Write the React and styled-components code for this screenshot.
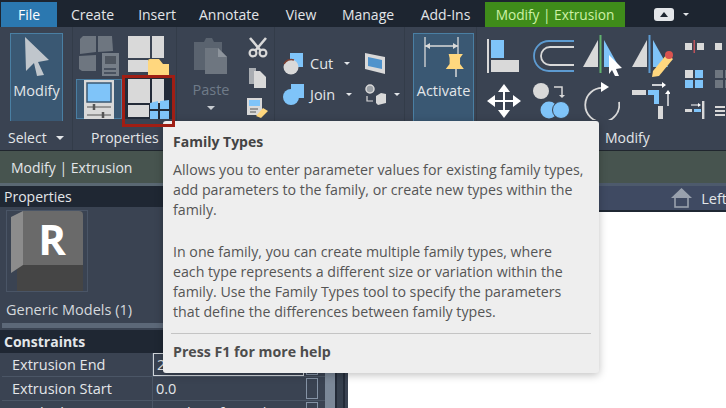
import React from 'react'
import styled, { createGlobalStyle } from 'styled-components'

const GREY = '#d9d9d9'
const BLUE = '#7fc4f9'
const YELLOW = '#ffd77e'

const GlobalStyles = createGlobalStyle`
  html, body {
    margin: 0;
    padding: 0;
    background: #ffffff;
  }
  * {
    box-sizing: border-box;
  }
`

const Page = styled.div`
  position: relative;
  width: 726px;
  height: 408px;
  overflow: hidden;
  font-family: "Open Sans", "Noto Sans", sans-serif;
  font-size: 14px;
  color: #e3e6e9;
  background: #ffffff;
`

const TabBar = styled.div`
  display: flex;
  align-items: flex-end;
  height: 27px;
  padding-left: 1px;
  background: #1d2530;
`

const Tab = styled.div`
  display: flex;
  align-items: center;
  justify-content: center;
  height: 25px;
  width: ${p => p.$w}px;
  background: ${p => p.$bg || 'transparent'};
  color: ${p => p.$color || '#e3e6e9'};
  font-size: ${p => p.$fs || 14}px;
  white-space: nowrap;
`

const ViewToggle = styled.div`
  display: flex;
  align-items: center;
  gap: 7px;
  margin-left: 29px;
  height: 25px;
`

const Ribbon = styled.div`
  display: flex;
  height: 124px;
  background: #3a4352;
  border-bottom: 1px solid #20262e;
`

const Panel = styled.div`
  position: relative;
  display: flex;
  flex-direction: column;
  width: ${p => p.$w}px;
  flex: none;
  border-right: ${p => (p.$last ? 'none' : '1px solid #333c49')};
`

const PanelBody = styled.div`
  display: flex;
  height: 98px;
  padding: 6px 0 0 ${p => p.$pl || 0}px;
`

const PanelLabel = styled.div`
  display: flex;
  align-items: center;
  gap: 9px;
  height: 25px;
  padding-left: ${p => p.$pl}px;
  font-size: 14px;
  color: #e3e6e9;
  white-space: nowrap;
`

const Caret = styled.span`
  display: inline-block;
  flex: none;
  width: 0;
  height: 0;
  margin-left: ${p => p.$ml || 0}px;
  border-left: ${p => p.$s || 4}px solid transparent;
  border-right: ${p => p.$s || 4}px solid transparent;
  border-top: ${p => p.$s || 4}px solid ${p => p.$color || '#e3e6e9'};
`

const LargeTool = styled.div`
  display: flex;
  flex-direction: column;
  align-items: center;
  width: ${p => p.$w}px;
  height: 88px;
  padding-top: ${p => p.$pt || 2}px;
  background: ${p => (p.$active ? '#3a5873' : 'transparent')};
  border: 1px solid ${p => (p.$active ? '#4a7fa3' : 'transparent')};
  border-bottom: ${p => (p.$active ? '0' : '1px solid transparent')};
  color: ${p => (p.$dim ? '#6f7b89' : '#e3e6e9')};
  font-size: 14.5px;
  line-height: 20px;
  gap: ${p => p.$gap ?? 3}px;
`

const PropertyGrid = styled.div`
  display: grid;
  grid-template-columns: 46px 53px;
  grid-template-rows: 42px 52px;
`

const PropertyCell = styled.div`
  position: relative;
  display: flex;
  justify-content: center;
  align-items: flex-start;
  padding-top: 3px;
`

const ActiveCell = styled.div`
  display: flex;
  justify-content: center;
  align-items: center;
  width: 46px;
  height: 40px;
  margin-top: 1px;
  background: #3a5873;
  border: 1px solid #4a7fa3;
`

const HoverTile = styled.div`
  display: flex;
  justify-content: center;
  width: 47px;
  height: 41px;
  padding-top: 1px;
  background: #232b38;
`

// the red frame was drawn over the shot, so it sits above the tooltip
const RedFrame = styled.div`
  position: absolute;
  left: 0;
  top: 0;
  width: 53px;
  height: 52px;
  border: 3px solid #a01e14;
  z-index: 3;
`

const IconColumn = styled.div`
  display: flex;
  flex-direction: column;
  align-items: center;
  gap: 10px;
  margin: 4px 0 0 11px;
`

const GeometryRows = styled.div`
  display: grid;
  grid-template-columns: 20px 48px 20px 14px;
  grid-template-rows: 31px 31px;
  align-items: center;
  margin-top: 15px;
  column-gap: 7px;
`

const ToolText = styled.div`
  display: flex;
  align-items: center;
  gap: 11px;
  font-size: 14.5px;
`

const BigIcons = styled.div`
  display: grid;
  grid-template-columns: 46px 50px 49px 53px;
  grid-template-rows: 45px 45px;
  align-items: center;
`

const SmallIcons = styled.div`
  display: grid;
  grid-template-columns: 30px 30px;
  grid-template-rows: 32px 31px 31px;
  align-items: center;
  margin-top: -2px;
`

const ContextBar = styled.div`
  display: flex;
  align-items: center;
  height: 32px;
  padding: 1px 0 0 11px;
  background: #47544f;
  font-size: 14px;
`

const Workspace = styled.div`
  display: flex;
  height: 225px;
`

const PropertiesPane = styled.div`
  width: 348px;
  flex: none;
  display: flex;
  flex-direction: column;
  background: #3a4352;
  border-top: 3px solid #5a6873;
`

const PaneTitle = styled.div`
  display: flex;
  flex: none;
  align-items: center;
  height: 21px;
  padding-left: 4px;
  background: #1f2733;
  font-size: 14px;
`

const TypeBlock = styled.div`
  display: flex;
  flex: none;
  flex-direction: column;
  height: 116px;
  padding: 3px 0 0 6px;
`

const Thumb = styled.div`
  display: flex;
  flex: none;
  justify-content: center;
  align-items: center;
  width: 82px;
  height: 82px;
  border: 1px solid #4a5566;
`

const TypeName = styled.div`
  margin-top: 8px;
  font-size: 14.5px;
  color: #d5d9dd;
`

const SplitLine = styled.div`
  flex: none;
  height: 5px;
  margin: 0 0 2px 2px;
  background: #5c6878;
`

const Grid = styled.div`
  display: grid;
  flex: none;
  grid-template-columns: 325px 23px;
  height: 80px;
`

const Rows = styled.div`
  display: flex;
  flex-direction: column;
`

const SectionRow = styled.div`
  display: flex;
  flex: none;
  align-items: center;
  height: 23px;
  padding-left: 4px;
  background: #1f2733;
  font-weight: 700;
  font-size: 14px;
`

const PropRow = styled.div`
  display: grid;
  flex: none;
  grid-template-columns: 151px 151px 19px;
  height: 24px;
  margin-left: 2px;
  border-bottom: 1px solid #4b5666;
`

const PropName = styled.div`
  display: flex;
  align-items: center;
  padding-left: 10px;
  font-size: 14.5px;
  border-right: 1px solid #4b5666;
`

const PropValue = styled.div`
  display: flex;
  align-items: center;
  padding-left: 3px;
  font-size: 14.5px;
  border: ${p => (p.$editing ? '1px solid #cfd4d9' : 'none')};
`

const RowCheck = styled.div`
  width: 12px;
  height: 21px;
  margin: 1px 0 0 2px;
  border: 1px solid #8593a5;
`

const ScrollTrack = styled.div`
  display: flex;
  background: #3a4352;
`

const ScrollThumb = styled.div`
  width: 10px;
  background: #7b8898;
`

const ScrollLane = styled.div`
  width: 10px;
  background: #36404e;
  border-left: 2px solid #232b38;
  border-right: 2px solid #232b38;
`

const ViewArea = styled.div`
  flex: 1;
  background: #ffffff;
`

const ViewHeader = styled.div`
  display: flex;
  align-items: center;
  justify-content: flex-end;
  gap: 9px;
  height: 29px;
  margin-right: -1px;
  background: #3f4a62;
  border-top: 3px solid #4d5a6c;
  border-bottom: 2px solid #1f2733;
  font-size: 14.5px;
`

const Tooltip = styled.div`
  position: absolute;
  left: 163px;
  top: 121px;
  z-index: 2;
  width: 436px;
  height: 252px;
  padding: 11px 8px 0 10px;
  background: #eeeeee;
  border-radius: 3px;
  box-shadow: 0 2px 8px rgba(0, 0, 0, 0.25);
  color: #555555;
`

const TipTitle = styled.div`
  font-weight: 700;
  font-size: 14px;
  line-height: 20px;
  color: #444444;
`

const TipText = styled.p`
  margin: 8px 0 22px;
  font-size: 14.2px;
  line-height: 20px;
  white-space: pre-line;
  & + & {
    margin-top: 0;
    margin-bottom: 11px;
  }
`

const TipRule = styled.div`
  height: 1px;
  margin-left: -2px;
  background: #c4c4c4;
`

const TipFooter = styled.div`
  margin-top: 8px;
  font-weight: 700;
  font-size: 14.2px;
  line-height: 20px;
  color: #4d4d4d;
`

const Pointer = () => (
  <svg width="26" height="42" viewBox="0 0 26 42">
    <polygon points="1,1 25,24 14,26 20,39 13,40 10,27 2,35" fill="#c0c6cc" />
  </svg>
)

const ViewCube = () => (
  <svg width="22" height="14" viewBox="0 0 22 14">
    <rect x="0" y="0" width="20" height="13" rx="3" fill="#e3e6e9" />
    <polygon points="6,9 10,4 14,9" fill="#1d2530" />
  </svg>
)

const TypesIcon = () => (
  <svg width="42" height="40" viewBox="0 0 42 40">
    <g fill="#6e7680">
      <polygon points="2,3 5,0 18,0 18,16 2,18" />
      <polygon points="20,0 34,0 35,15 20,16" />
      <polygon points="1,20 18,19 18,35 4,35 1,33" />
    </g>
    <rect x="24" y="17" width="17" height="23" fill="#767e88" />
    <rect x="27" y="20" width="11" height="8" fill="#4f5660" />
    <path d="M26 33h12M26 37h12" stroke="#3a4352" strokeWidth="1.4" />
  </svg>
)

const FolderIcon = () => (
  <svg width="41" height="41" viewBox="0 0 41 41">
    <g fill={GREY}>
      <rect x="0" y="0" width="22" height="22" />
      <rect x="24" y="0" width="12" height="22" />
      <rect x="0" y="24" width="20" height="12" />
    </g>
    <path d="M20 41V25q0-2 2-2h9l4 5h6v13z" fill={YELLOW} />
  </svg>
)

const TypePropsIcon = () => (
  <svg width="30" height="39" viewBox="0 0 30 39">
    <rect width="30" height="39" fill="#d9d9d9" />
    <rect x="3" y="3" width="24" height="19" fill={BLUE} stroke="#3a5873" strokeWidth="1.5" />
    <path d="M3 27h24M3 35h24" stroke="#555" strokeWidth="1" />
    <path d="M10 24v6M19 32v6" stroke="#555" strokeWidth="2.5" />
  </svg>
)

const FamilyTypesIcon = () => (
  <svg width="42" height="40" viewBox="0 0 42 40">
    <g fill={GREY}>
      <rect x="0" y="0" width="22" height="24" />
      <rect x="24" y="0" width="12" height="24" />
      <rect x="0" y="26" width="21" height="12" />
    </g>
    <g fill={BLUE}>
      <polygon points="22,24 30,22 30,30 22,30" />
      <polygon points="32,22 41,21 41,30 32,30" />
      <rect x="22" y="32" width="8" height="8" />
      <rect x="32" y="32" width="9" height="8" />
    </g>
  </svg>
)

const PasteIcon = () => (
  <svg width="34" height="38" viewBox="0 0 34 38">
    <path d="M0 6h10l2-4h6l2 4h8v28H0z" fill="#5a636f" />
    <path d="M11 12h13l9 9v17H11z" fill="#6e7680" />
    <path d="M24 12l9 9h-9z" fill="#8d949c" />
  </svg>
)

const Scissors = () => (
  <svg width="20" height="21" viewBox="0 0 20 21">
    <path d="M2 1l11 13M18 1L7 14" stroke={GREY} strokeWidth="2.6" />
    <circle cx="5" cy="16" r="3.4" fill="none" stroke={GREY} strokeWidth="2.2" />
    <circle cx="15" cy="16" r="3.4" fill="none" stroke={GREY} strokeWidth="2.2" />
  </svg>
)

const CopyIcon = () => (
  <svg width="17" height="20" viewBox="0 0 17 20">
    <path d="M0 0h7v16H0z" fill="#a9adb2" />
    <path d="M5 3h6l6 6v11H5z" fill={GREY} />
  </svg>
)

const MatchIcon = () => (
  <svg width="21" height="20" viewBox="0 0 21 20">
    <rect width="15" height="17" fill={GREY} />
    <rect x="2" y="2" width="11" height="6" fill={BLUE} />
    <path d="M3 11h8M3 14h6" stroke="#555" />
    <path d="M9 18l7-8 5 3-7 7z" fill={YELLOW} />
  </svg>
)

const CutIcon = () => (
  <svg width="20" height="22" viewBox="0 0 20 22">
    <rect x="7" y="0" width="13" height="14" fill={BLUE} />
    <circle cx="8" cy="14" r="7.5" fill={GREY} />
    <path d="M1 11a8 8 0 0 1 10-4" stroke="#7b3f32" strokeWidth="1.5" fill="none" />
  </svg>
)

const JoinIcon = () => (
  <svg width="21" height="21" viewBox="0 0 21 21">
    <rect x="8" y="0" width="13" height="14" fill={BLUE} />
    <circle cx="8" cy="13" r="8" fill={BLUE} />
  </svg>
)

const WindowIcon = () => (
  <svg width="20" height="21" viewBox="0 0 20 21">
    <polygon points="0,0 20,4 20,21 0,16" fill={GREY} />
    <polygon points="3,4 17,7 17,16 3,13" fill="#4f93cc" />
  </svg>
)

const ConvertIcon = () => (
  <svg width="21" height="21" viewBox="0 0 21 21">
    <circle cx="5" cy="5" r="4" fill="#9aa0a6" stroke="#d9d9d9" strokeWidth="1.5" />
    <path d="M2 12v5h6" fill="none" stroke={GREY} strokeWidth="1.2" />
    <polygon points="11,12 16,9 21,10 21,19 13,21 11,19" fill={GREY} />
  </svg>
)

const ActivateIcon = () => (
  <svg width="40" height="42" viewBox="0 0 40 42">
    <path d="M1 0v30M34 0v22M1 9h33" stroke={GREY} strokeWidth="1.3" fill="none" />
    <path d="M1 9l5-3v6zM34 9l-5-3v6z" fill={GREY} />
    <path d="M27 17h15l-3 4v6l4 5H24l4-5v-6z" transform="translate(-1 0) scale(.95 1)" fill={YELLOW} />
    <path d="M32 32v8" stroke={GREY} strokeWidth="1.5" />
  </svg>
)

const AlignIcon = () => (
  <svg width="33" height="34" viewBox="0 0 33 34">
    <rect x="0" y="0" width="2" height="34" fill={GREY} />
    <rect x="4" y="1" width="13" height="18" fill={BLUE} />
    <rect x="4" y="21" width="28" height="12" fill={GREY} />
  </svg>
)

const OffsetIcon = () => (
  <svg width="42" height="32" viewBox="0 0 42 32">
    <path d="M41 1H16a15 15 0 0 0 0 30h25" fill="none" stroke="#5d9bd1" strokeWidth="1.8" />
    <path d="M41 7H17a9 9 0 0 0 0 18h24" fill="none" stroke={GREY} strokeWidth="1.8" />
  </svg>
)

const MirrorIcon = ({ line = '#61b36e', cursor }) => (
  <svg width="41" height="42" viewBox="0 0 41 42">
    <polygon points="0,32 15,5 15,32" fill={GREY} />
    <rect x="16.5" y="0" width="2" height="38" fill={line} />
    <polygon points="21,5 36,32 21,32" fill={BLUE} />
    {cursor && <polygon points="26,20 39,33 33,34 36,41 32,41 29,35 26,39" fill="#ffffff" />}
  </svg>
)

const MirrorDrawIcon = () => (
  <svg width="41" height="42" viewBox="0 0 41 42">
    <polygon points="0,32 15,5 15,32" fill={GREY} />
    <rect x="16.5" y="0" width="2" height="38" fill="#5d9bd1" />
    <polygon points="21,5 36,32 21,32" fill={BLUE} />
    <path d="M21 36l14-17 6 5-14 17-7 1z" fill={YELLOW} />
    <circle cx="37" cy="20" r="4" fill="#d9534f" />
  </svg>
)

const MoveIcon = () => (
  <svg width="34" height="34" viewBox="0 0 34 34" fill="#ffffff">
    <path d="M17 0l6 8h-5v8h8v-5l8 6-8 6v-5h-8v8h5l-6 8-6-8h5v-8H8v5L0 17l8-6v5h8V8h-5z" />
  </svg>
)

const CopyCirclesIcon = () => (
  <svg width="37" height="36" viewBox="0 0 37 36">
    <circle cx="8" cy="8" r="8" fill={GREY} />
    <path d="M21 4h8v8" fill="none" stroke={GREY} strokeWidth="1.5" />
    <path d="M26 12l3 3 3-3z" fill={GREY} />
    <circle cx="16" cy="27" r="8.5" fill={BLUE} />
    <circle cx="28" cy="27" r="8.5" fill={BLUE} stroke="#3a4352" strokeWidth="1" />
  </svg>
)

const RotateIcon = () => (
  <svg width="37" height="38" viewBox="0 0 37 38">
    <path d="M21 6a17 17 0 1 0 15 14" fill="none" stroke={GREY} strokeWidth="1.8" />
    <polygon points="18,0 26,5 18,10" fill="#ffffff" />
  </svg>
)

const TrimIcon = () => (
  <svg width="38" height="37" viewBox="0 0 38 37">
    <path d="M0 8h14v5H0z" fill={GREY} />
    <path d="M16 8h11v14h-5v-9h-6z" fill={BLUE} />
    <rect x="26" y="24" width="5" height="13" fill={GREY} />
    <path d="M20 3h10M36 11v13" stroke="#ffffff" strokeWidth="1.3" />
    <path d="M30 0l4 3-4 3zM33 12l3-4 3 4z" fill="#ffffff" />
  </svg>
)

const SplitGapIcon = ({ bar = true }) => (
  <svg width="20" height="14" viewBox="0 0 20 14">
    <rect x="0" y="3" width="7" height="7" fill={GREY} />
    {bar && <rect x="8.5" y="0" width="1.5" height="13" fill="#c0525a" />}
    <rect x="12" y="3" width="7" height="7" fill={GREY} />
  </svg>
)

const ArrayIcon = ({ on = true }) => (
  <svg width="18" height="18" viewBox="0 0 18 18">
    <rect x="0" y="0" width="8" height="8" fill={on ? GREY : '#6e7680'} />
    <rect x="10" y="0" width="8" height="8" fill={on ? BLUE : '#6e7680'} />
    <rect x="0" y="10" width="8" height="8" fill={on ? BLUE : '#6e7680'} />
    <rect x="10" y="10" width="8" height="8" fill={on ? BLUE : '#6e7680'} />
  </svg>
)

const ExtendIcon = () => (
  <svg width="20" height="18" viewBox="0 0 20 18">
    <rect x="17" y="0" width="2.4" height="18" fill={GREY} />
    <rect x="0" y="8" width="7" height="3" fill={GREY} />
    <rect x="9" y="8" width="7" height="3" fill={BLUE} />
    <path d="M6 4h8" stroke="#ffffff" />
    <path d="M13 2l3 2-3 2z" fill="#ffffff" />
  </svg>
)

const LinesIcon = () => (
  <svg width="10" height="18" viewBox="0 0 10 18">
    <path d="M0 6h10M0 10h10M0 14h10" stroke={GREY} strokeWidth="2" />
  </svg>
)

const HomeIcon = () => (
  <svg width="21" height="20" viewBox="0 0 21 20">
    <polygon points="10.5,0 21,10 0,10" fill="#99a1ad" />
    <rect x="4" y="9" width="13" height="10" fill="none" stroke="#99a1ad" strokeWidth="1.6" />
  </svg>
)

const RevitThumb = () => (
  <svg width="72" height="80" viewBox="0 0 72 80">
    <polygon points="6,54 72,54 72,80 6,80" fill="#454545" />
    <polygon points="0,6 12,0 12,54 0,62" fill="#8c8c8c" />
    <path d="M12 0h56q4 0 4 4v50H12z" fill="#6a6a6a" />
    <text x="41" y="44" textAnchor="middle" fontFamily="Open Sans, sans-serif" fontWeight="700" fontSize="42" fill="#ffffff">R</text>
  </svg>
)

const tabs = [
  ['Create', 71],
  ['Insert', 58],
  ['Annotate', 86],
  ['View', 58],
  ['Manage', 76],
  ['Add-Ins', 79],
]

export default function App() {
  return (
    <Page>
      <GlobalStyles />
      <TabBar>
        <Tab $w={56} $bg="#2b78b0" $color="#ffffff">File</Tab>
        {tabs.map(([name, w]) => (
          <Tab key={name} $w={w}>{name}</Tab>
        ))}
        <Tab $w={140} $bg="#3f8c1a" $color="#cdf1a6" $fs={13.7}>Modify | Extrusion</Tab>
        <ViewToggle>
          <ViewCube />
          <Caret $s={3} />
        </ViewToggle>
      </TabBar>

      <Ribbon>
        <Panel $w={73}>
          <PanelBody $pl={10}>
            <LargeTool $w={53} $active>
              <Pointer />
              Modify
            </LargeTool>
          </PanelBody>
          <PanelLabel $pl={8}>Select <Caret $s={4.5} /></PanelLabel>
        </Panel>

        <Panel $w={104}>
          <PanelBody $pl={3}>
            <PropertyGrid>
              <PropertyCell><TypesIcon /></PropertyCell>
              <PropertyCell><FolderIcon /></PropertyCell>
              <PropertyCell><ActiveCell><TypePropsIcon /></ActiveCell></PropertyCell>
              <PropertyCell>
                <HoverTile><FamilyTypesIcon /></HoverTile>
                <RedFrame />
              </PropertyCell>
            </PropertyGrid>
          </PanelBody>
          <PanelLabel $pl={18}>Properties</PanelLabel>
        </Panel>

        <Panel $w={98}>
          <PanelBody $pl={9}>
            <LargeTool $w={50} $dim $gap={6}>
              <PasteIcon />
              Paste
              <Caret $color="#c7ccd1" />
            </LargeTool>
            <IconColumn>
              <Scissors />
              <CopyIcon />
              <MatchIcon />
            </IconColumn>
          </PanelBody>
        </Panel>

        <Panel $w={130}>
          <PanelBody $pl={8}>
            <GeometryRows>
              <CutIcon />
              <ToolText>Cut <Caret $s={3} /></ToolText>
              <WindowIcon />
              <span />
              <JoinIcon />
              <ToolText>Join <Caret $s={3} /></ToolText>
              <ConvertIcon />
              <Caret $s={3} $ml={2} />
            </GeometryRows>
          </PanelBody>
        </Panel>

        <Panel $w={72}>
          <PanelBody $pl={8}>
            <LargeTool $w={61} $active $pt={3} $gap={2}>
              <ActivateIcon />
              Activate
            </LargeTool>
          </PanelBody>
        </Panel>

        <Panel $w={249} $last>
          <PanelBody $pl={10}>
            <BigIcons>
              <AlignIcon />
              <OffsetIcon />
              <MirrorIcon cursor />
              <MirrorDrawIcon />
              <MoveIcon />
              <CopyCirclesIcon />
              <RotateIcon />
              <TrimIcon />
            </BigIcons>
            <SmallIcons>
              <SplitGapIcon />
              <SplitGapIcon bar={false} />
              <ArrayIcon />
              <ArrayIcon on={false} />
              <ExtendIcon />
              <LinesIcon />
            </SmallIcons>
          </PanelBody>
          <PanelLabel $pl={128}>Modify</PanelLabel>
        </Panel>
      </Ribbon>

      <ContextBar>Modify | Extrusion</ContextBar>

      <Workspace>
        <PropertiesPane>
          <PaneTitle>Properties</PaneTitle>
          <TypeBlock>
            <Thumb><RevitThumb /></Thumb>
            <TypeName>Generic Models (1)</TypeName>
          </TypeBlock>
          <SplitLine />
          <Grid>
            <Rows>
              <SectionRow>Constraints</SectionRow>
              <PropRow>
                <PropName>Extrusion End</PropName>
                <PropValue $editing>2</PropValue>
                <RowCheck />
              </PropRow>
              <PropRow>
                <PropName>Extrusion Start</PropName>
                <PropValue>0.0</PropValue>
                <RowCheck />
              </PropRow>
              <PropRow>
                <PropName>Work Plane</PropName>
                <PropValue>Level : Ref. Level</PropValue>
                <RowCheck />
              </PropRow>
            </Rows>
            <ScrollTrack>
              <ScrollThumb />
              <ScrollLane />
            </ScrollTrack>
          </Grid>
        </PropertiesPane>
        <ViewArea>
          <ViewHeader>
            <HomeIcon />
            Left
          </ViewHeader>
        </ViewArea>
      </Workspace>

      <Tooltip>
        <TipTitle>Family Types</TipTitle>
        <TipText>{`Allows you to enter parameter values for existing family types,
add parameters to the family, or create new types within the
family.`}</TipText>
        <TipText>{`In one family, you can create multiple family types, where
each type represents a different size or variation within the
family. Use the Family Types tool to specify the parameters
that define the differences between family types.`}</TipText>
        <TipRule />
        <TipFooter>Press F1 for more help</TipFooter>
      </Tooltip>
    </Page>
  )
}
